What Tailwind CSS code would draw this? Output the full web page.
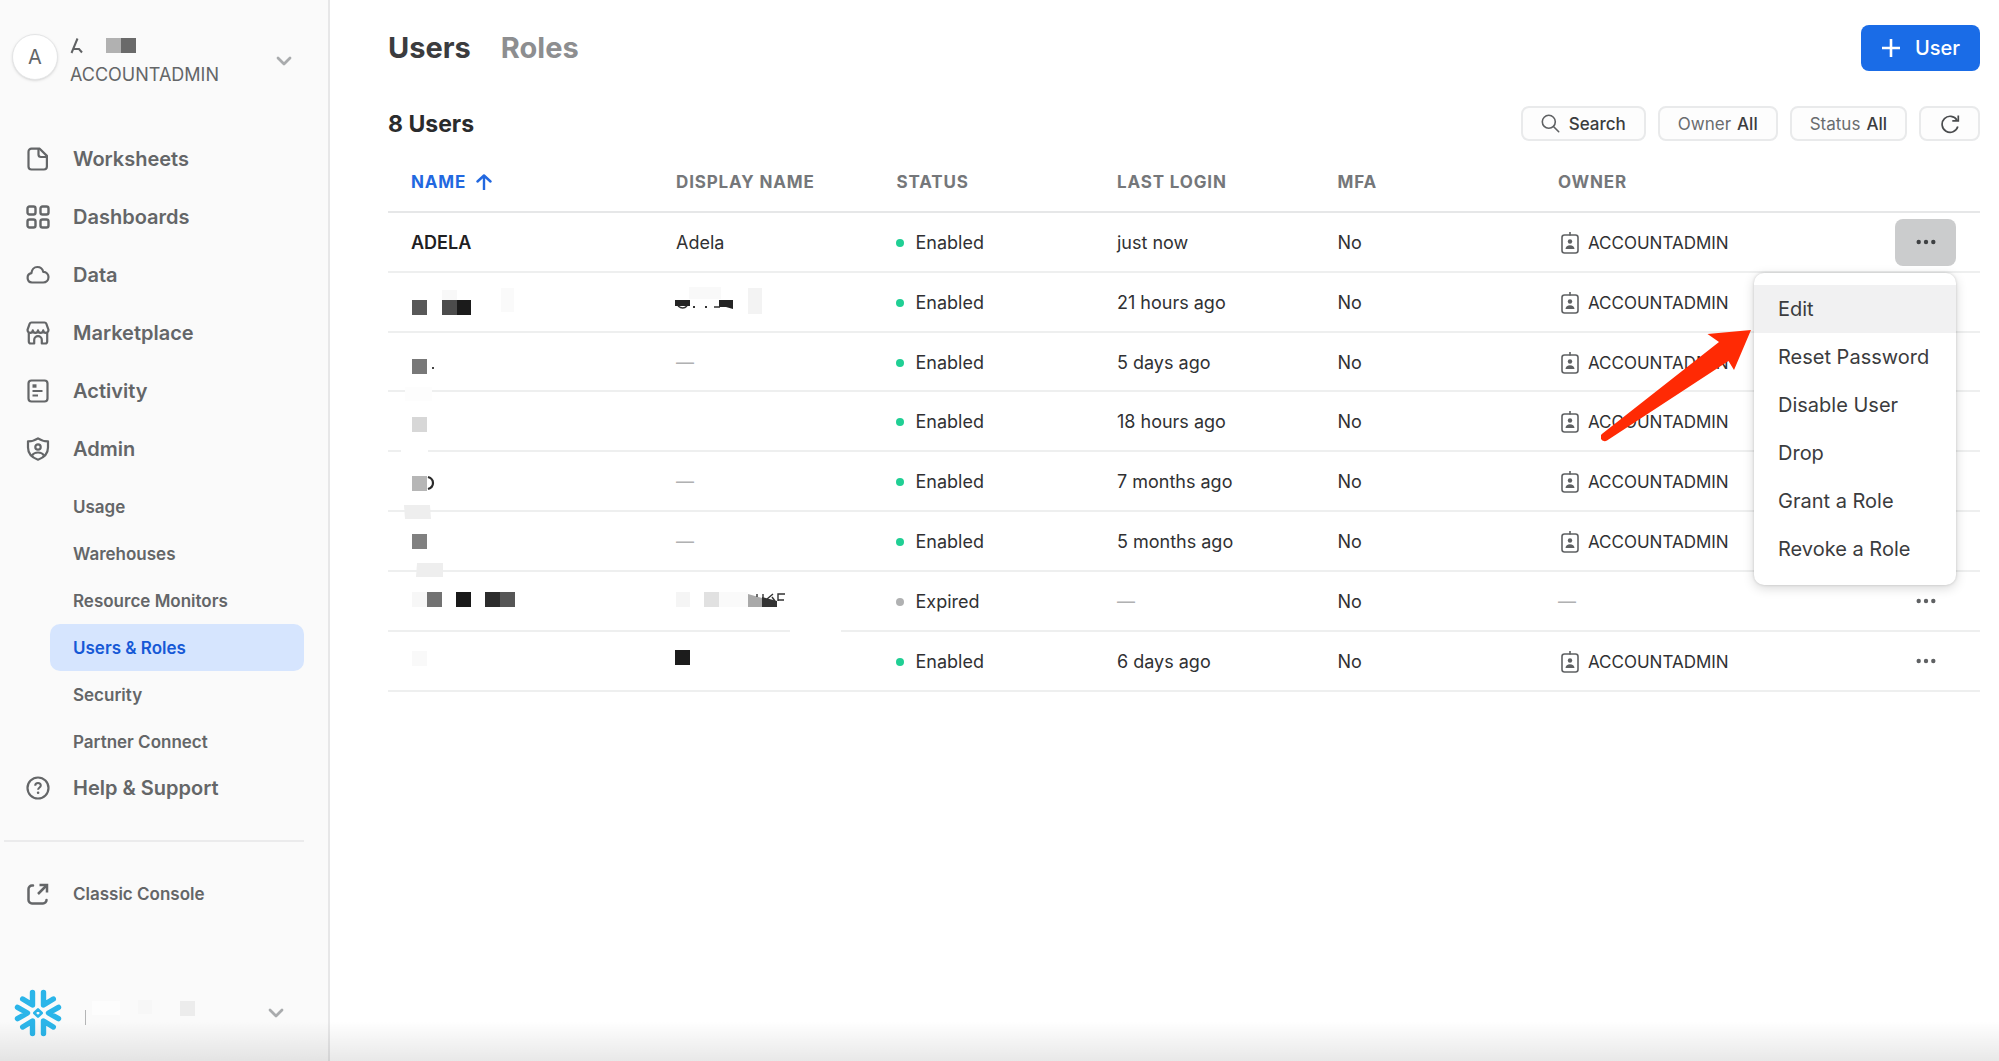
<!DOCTYPE html>
<html lang="en">
<head>
<meta charset="utf-8">
<meta name="viewport" content="width=device-width, initial-scale=1">
<title>Users &amp; Roles</title>
<script src="https://cdn.jsdelivr.net/npm/@tailwindcss/browser@4"></script>
</head>
<body class="relative flex min-h-screen bg-white font-['Inter',sans-serif] text-[18px] leading-6 text-[#303133]">
<svg class="hidden" aria-hidden="true">
  <symbol id="chevron" viewBox="0 0 16 10"><path d="M2 2l6 6 6-6" fill="none" stroke="#a9abad" stroke-width="2.800" stroke-linecap="round" stroke-linejoin="round"/></symbol>
  <symbol id="badge" viewBox="0 0 20 24"><rect x="2" y="4" width="16" height="18" rx="2.5" fill="none" stroke="#5f6163" stroke-width="1.600"/><path d="M10 1v3.500" stroke="#5f6163" stroke-width="1.600"/><circle cx="10" cy="10.500" r="2.200" fill="#5f6163"/><path d="M5.500 18c0-2.500 2-3.800 4.500-3.800s4.500 1.300 4.500 3.800z" fill="#5f6163"/></symbol>
  <symbol id="dots" viewBox="0 0 20 6"><circle cx="2.700" cy="3" r="2.200"/><circle cx="10" cy="3" r="2.200"/><circle cx="17.300" cy="3" r="2.200"/></symbol>
</svg>

<aside class="flex w-[330px] shrink-0 flex-col border-r-2 border-[#e7e7e8] bg-[#fafafa] text-[#646668]">
  <button type="button" class="flex items-start pt-[34px] pr-9 pl-3 text-left">
    <span class="flex size-[46px] shrink-0 items-center justify-center rounded-full border border-[#e4e5e6] bg-white text-[20px] shadow-sm">A</span>
    <span class="ml-3 flex flex-1 flex-col gap-[7px]">
      <svg class="h-[22px] w-[70px]" viewBox="0 0 70 22"><path d="M1.500 19L7.500 4.500M3 15h6l3 3.500" fill="none" stroke="#606264" stroke-width="2"/><path fill="#b1b1b1" d="M36 4h15v15H36z"/><path fill="#6a6a6a" d="M51 4h15v15H51z"/></svg>
      <span>ACCOUNTADMIN</span>
    </span>
    <svg class="h-[10px] w-4 self-center"><use href="#chevron"/></svg>
  </button>

  <nav class="mt-[43px] flex flex-col text-[20px] font-semibold">
    <a href="#" class="flex h-[58px] items-center gap-[23px] pl-[26px]">
      <svg class="size-6" viewBox="0 0 24 24" fill="none" stroke="currentColor" stroke-width="2.200" stroke-linejoin="round"><path d="M5.500 1.700h8.200l7.200 7.200v10.600a3 3 0 0 1-3 3H5.500a3 3 0 0 1-3-3V4.700a3 3 0 0 1 3-3z"/><path d="M12.500 2v5.500a2.500 2.500 0 0 0 2.500 2.500h5.800"/></svg>Worksheets</a>
    <a href="#" class="flex h-[58px] items-center gap-[23px] pl-[26px]">
      <svg class="size-6" viewBox="0 0 24 24" fill="none" stroke="currentColor" stroke-width="2.400"><rect x="1.500" y="1.500" width="8" height="8" rx="2"/><rect x="14.500" y="1.500" width="8" height="8" rx="2"/><rect x="1.500" y="14.500" width="8" height="8" rx="2"/><rect x="14.500" y="14.500" width="8" height="8" rx="2"/></svg>Dashboards</a>
    <a href="#" class="flex h-[58px] items-center gap-[23px] pl-[26px]">
      <svg class="size-6" viewBox="0 0 24 24" fill="none" stroke="currentColor" stroke-width="2.200" stroke-linejoin="round"><path d="M6 19.500a4.700 4.700 0 0 1-.6-9.300C5.800 6.500 8.200 4 11.300 4c3 0 5.300 2 6 4.900 3 .2 5.200 2.400 5.200 5.200 0 3-2.300 5.400-5.300 5.400z"/></svg>Data</a>
    <a href="#" class="flex h-[58px] items-center gap-[23px] pl-[26px]">
      <svg class="size-6" viewBox="0 0 24 24" fill="none" stroke="currentColor" stroke-width="2.200" stroke-linejoin="round" stroke-linecap="round"><path d="M5.500 1.500h13a2 2 0 0 1 1.900 1.300l2.100 6c0 2-1.300 3-2.700 3-1.500 0-2.600-1-2.600-2.500 0 1.500-1.100 2.500-2.600 2.500S12 10.800 12 9.300c0 1.500-1.100 2.500-2.600 2.500S6.800 10.800 6.800 9.300c0 1.500-1.100 2.500-2.600 2.500s-2.700-1-2.700-3l2.100-6a2 2 0 0 1 1.900-1.300z"/><path d="M2.800 12v8.500a2 2 0 0 0 2 2h3.400V19a3.800 3.800 0 0 1 7.600 0v3.500h3.400a2 2 0 0 0 2-2V12"/></svg>Marketplace</a>
    <a href="#" class="flex h-[58px] items-center gap-[23px] pl-[26px]">
      <svg class="size-6" viewBox="0 0 24 24" fill="none" stroke="currentColor" stroke-width="2.200"><rect x="2.500" y="1.500" width="19" height="21" rx="3"/><path d="M6.500 7h4" stroke-width="3.400"/><path d="M6.500 12h10M6.500 16.500h5.500"/></svg>Activity</a>
    <a href="#" class="flex h-[58px] items-center gap-[23px] pl-[26px]">
      <svg class="size-6" viewBox="0 0 24 24" fill="none" stroke="currentColor" stroke-width="2.200" stroke-linejoin="round"><path d="M12 1.300c2.500 1.800 6 2.900 10 3v6.200c0 5.500-3.300 9.800-10 12.200C5.300 20.300 2 16 2 10.500V4.300c4-.1 7.500-1.200 10-3z"/><circle cx="12" cy="10" r="2.700"/><path d="M6 18.500c1.200-2 3.300-3 6-3s4.800 1 6 3"/></svg>Admin</a>

    <div class="flex flex-col pt-[5px] pr-6 pl-[50px] text-[17px]">
      <a href="#" class="flex h-[47px] items-center pl-[23px]">Usage</a>
      <a href="#" class="flex h-[47px] items-center pl-[23px]">Warehouses</a>
      <a href="#" class="flex h-[47px] items-center pl-[23px]">Resource Monitors</a>
      <a href="#" aria-current="page" class="flex h-[47px] items-center rounded-[10px] bg-[#d6e5fe] pl-[23px] text-[#1659d6]">Users &amp; Roles</a>
      <a href="#" class="flex h-[47px] items-center pl-[23px]">Security</a>
      <a href="#" class="flex h-[47px] items-center pl-[23px]">Partner Connect</a>
    </div>

    <a href="#" class="flex h-[46px] items-center gap-[23px] pl-[26px]">
      <svg class="size-6" viewBox="0 0 24 24" fill="none" stroke="currentColor" stroke-width="2.200"><circle cx="12" cy="12" r="10.500"/><path d="M9.200 9.700c0-1.700 1.200-2.700 2.800-2.700s2.800 1 2.800 2.500c0 2-2.700 2-2.700 4.300" stroke-width="2"/><circle cx="12.100" cy="16.800" r=".6" stroke-width="1.400"/></svg>Help &amp; Support</a>
    <hr class="mt-[29px] mr-6 ml-1 border-t-2 border-[#ebebec]">
    <a href="#" class="mt-[29px] flex h-[46px] items-center gap-[23px] pl-[26px] text-[17px]">
      <svg class="size-6" viewBox="0 0 24 24" fill="none" stroke="currentColor" stroke-width="2.500" stroke-linecap="round"><path d="M7 3.500H6A3.500 3.500 0 0 0 2.500 7v11A3.500 3.500 0 0 0 6 21.500h11a3.500 3.500 0 0 0 3.500-3.500"/><path d="M12 12l8.500-8.500" stroke-linecap="butt"/><path d="M13.500 3H21v7.500" stroke-linecap="butt"/></svg>Classic Console</a>
  </nav>

  <button type="button" class="mt-auto flex items-center pr-11 pb-6 pl-[14px]" aria-label="Switch account">
    <svg class="size-12" viewBox="0 0 48 48" fill="none" stroke="#2bb5e9" stroke-width="5.400" stroke-linecap="round" stroke-linejoin="round"><path d="M18.500 3.500V16L8.700 10M29.500 3.500V16l9.800-6M18.500 44.500V32l-9.800 6M29.500 44.500V32l9.800 6M3.500 18.300L13.500 24l-10 5.700M44.500 18.300L34.500 24l10 5.700"/><path d="M24 20.300l3.700 3.700-3.700 3.700-3.700-3.700z" stroke-width="2.600"/></svg>
    <svg class="ml-[21px] h-7 w-[120px]" viewBox="0 0 120 28"><path fill="#b4b5b6" d="M2 11h1v15H2z"/><path fill="#fdfdfd" d="M9 2h28v14H9z"/><path fill="#f7f7f7" d="M55 1h14v14H55z"/><path fill="#ececec" d="M97 2h15v15H97z"/></svg>
    <svg class="ml-auto h-[10px] w-4"><use href="#chevron"/></svg>
  </button>
</aside>

<main class="min-w-0 flex-1 pr-[19px] pl-[58px]">
  <header class="flex items-center justify-between pt-[25px]">
    <nav class="flex gap-[30px] text-[29px] leading-9 font-bold">
      <a href="#" aria-current="page" class="text-[#3b3c3e]">Users</a>
      <a href="#" class="text-[#8d8e90]">Roles</a>
    </nav>
    <button type="button" class="flex h-[46px] items-center gap-[14px] rounded-lg bg-[#1a6ce7] px-5 text-[20px] font-medium text-white">
      <svg class="size-5" viewBox="0 0 20 20" stroke="currentColor" stroke-width="2.600"><path d="M10 1v18M1 10h18"/></svg>User
    </button>
  </header>

  <div class="mt-[35px] flex items-center justify-between">
    <h1 class="text-[23px] font-bold text-[#2a2b2d]">8 Users</h1>
    <div class="flex gap-3 text-[17px]">
      <button type="button" class="flex h-[35px] items-center gap-[9px] rounded-lg border-2 border-[#e9eaeb] bg-[#fdfdfd] px-[18px] font-medium text-[#3b3c3e]">
        <svg class="size-[19px]" viewBox="0 0 19 19" fill="none" stroke="#5f6163" stroke-width="1.600" stroke-linecap="round"><circle cx="7.800" cy="7.800" r="6.500"/><path d="M12.700 12.700l5 5"/></svg>Search</button>
      <button type="button" class="flex h-[35px] items-center gap-[6px] rounded-lg border-2 border-[#e9eaeb] bg-[#fdfdfd] px-[18px] text-[#6a6c6e]">Owner <span class="font-medium text-[#3b3c3e]">All</span></button>
      <button type="button" class="flex h-[35px] items-center gap-[6px] rounded-lg border-2 border-[#e9eaeb] bg-[#fdfdfd] px-[18px] text-[#6a6c6e]">Status <span class="font-medium text-[#3b3c3e]">All</span></button>
      <button type="button" aria-label="Refresh" class="flex h-[35px] w-[61px] items-center justify-center rounded-lg border-2 border-[#e9eaeb] bg-[#fdfdfd]">
        <svg class="size-5" viewBox="0 0 20 20" fill="none" stroke="#4a4c4e" stroke-width="1.700"><path d="M17.800 12.500A8 8 0 1 1 17 6.200"/><path d="M18.300 1.500v5.300h-6"/></svg></button>
    </div>
  </div>

  <table class="mt-[11px] w-full table-fixed border-collapse text-left">
    <colgroup><col class="w-[265px]"><col class="w-[13.85%]"><col class="w-[13.85%]"><col class="w-[13.85%]"><col class="w-[13.85%]"><col><col class="w-[108px]"></colgroup>
    <thead>
      <tr class="h-[60px] border-b-2 border-[#e6e7e8] text-[17px] font-semibold tracking-wider text-[#75777a]">
        <th class="pl-[23px] text-[#2268e0]"><span class="flex items-center gap-[10px]">NAME <svg class="size-4" viewBox="0 0 16 16" fill="none" stroke="currentColor" stroke-width="2.400" stroke-linecap="round" stroke-linejoin="round"><path d="M8 15.500V1.500M1.500 7.500l6.500-6 6.500 6"/></svg></span></th>
        <th class="pl-[23px]">DISPLAY NAME</th>
        <th class="pl-[23px]">STATUS</th>
        <th class="pl-[23px]">LAST LOGIN</th>
        <th class="pl-[23px]">MFA</th>
        <th class="pl-[23px]">OWNER</th>
        <th></th>
      </tr>
    </thead>
    <tbody>
      <tr class="h-[60px] border-b-2 border-[#eeefef]">
        <td class="pt-[2px] pl-[23px] font-semibold text-[#1f2022]">ADELA</td>
        <td class="pt-[2px] pl-[23px]">Adela</td>
        <td class="pt-[2px] pl-[23px]"><span class="flex items-center gap-[11px]"><i class="size-2 rounded-full bg-[#20cf94]"></i>Enabled</span></td>
        <td class="pt-[2px] pl-[23px]">just now</td>
        <td class="pt-[2px] pl-[23px]">No</td>
        <td class="pt-[2px] pl-[23px]"><span class="flex items-center gap-2 pl-[2px] text-[17px]"><svg class="h-6 w-5"><use href="#badge"/></svg>ACCOUNTADMIN</span></td>
        <td class="pr-6">
          <div class="relative ml-auto w-[61px]">
            <button type="button" aria-label="Actions" aria-expanded="true" class="flex h-[47px] w-full items-center justify-center rounded-lg bg-[#cbcccd]"><svg class="h-[6px] w-5 fill-[#3f4143]"><use href="#dots"/></svg></button>
            <div class="absolute top-[54px] right-0 z-10 flex w-[202px] flex-col rounded-[10px] bg-white py-3 text-[20px] text-[#3b3c3e] shadow-[0_3px_12px_rgba(0,0,0,0.16),0_0_3px_rgba(0,0,0,0.16)]" role="menu">
              <button type="button" role="menuitem" class="h-12 bg-[#f1f1f2] pl-6 text-left">Edit</button>
              <button type="button" role="menuitem" class="h-12 pl-6 text-left whitespace-nowrap">Reset Password</button>
              <button type="button" role="menuitem" class="h-12 pl-6 text-left">Disable User</button>
              <button type="button" role="menuitem" class="h-12 pl-6 text-left">Drop</button>
              <button type="button" role="menuitem" class="h-12 pl-6 text-left">Grant a Role</button>
              <button type="button" role="menuitem" class="h-12 pl-6 text-left">Revoke a Role</button>
              <svg class="absolute top-[57px] -left-[153px] h-[114px] w-[152px]" viewBox="0 0 152 114" fill="#ff2a04"><path d="M150 0L133 40 127.500 31 6 110.500A4 4 0 0 1 1.500 103.500L118 12 106.500 4z"/></svg>
            </div>
          </div>
        </td>
      </tr>
      <tr class="h-[60px] border-b-2 border-[#eeefef]">
        <td class="pl-[23px]"><svg class="h-[58px] w-[110px] overflow-visible" viewBox="0 0 110 58"><path fill="#f8f8f8" d="M31 17h15v10H31z"/><path fill="#fafafa" d="M90 15h13v24H90z"/><path fill="#585858" d="M1 27h15v15H1z"/><path fill="#4c4c4c" d="M31 27h15v15H31z"/><path fill="#1b1b1b" d="M46 27h14v15H46z"/></svg></td>
        <td class="pl-[23px]"><svg class="h-[58px] w-[110px] overflow-visible" viewBox="0 0 110 58"><path fill="#f9f9f9" d="M13 14h32v12H13z"/><path fill="#f3f3f3" d="M72 15h14v26H72z"/><path fill="#242424" d="M-1 27h15v6H-1zM43 27h14v9l-7-2h-7z"/><path d="M2 33q5 4 9 0M38 34h6" fill="none" stroke="#333" stroke-width="1.500"/><path fill="#333" d="M17 33h2v2h-2zM29 33h2v2h-2z"/></svg></td>
        <td class="pt-[2px] pl-[23px]"><span class="flex items-center gap-[11px]"><i class="size-2 rounded-full bg-[#20cf94]"></i>Enabled</span></td>
        <td class="pt-[2px] pl-[23px]">21 hours ago</td>
        <td class="pt-[2px] pl-[23px]">No</td>
        <td class="pt-[2px] pl-[23px]"><span class="flex items-center gap-2 pl-[2px] text-[17px]"><svg class="h-6 w-5"><use href="#badge"/></svg>ACCOUNTADMIN</span></td>
        <td class="pr-6"><button type="button" aria-label="Actions" class="ml-auto flex h-[47px] w-[61px] items-center justify-center"><svg class="h-[6px] w-5 fill-[#5f6163]"><use href="#dots"/></svg></button></td>
      </tr>
      <tr class="h-[59px] border-b-2 border-[#eeefef]">
        <td class="pl-[23px]"><svg class="relative h-[57px] w-[110px] overflow-visible" viewBox="0 0 110 57"><path fill="#787878" d="M1 26h15v15H1z"/><path fill="#444" d="M21 34h2v2h-2z"/><path fill="#fdfdfd" d="M-6 54h27v14H-6z"/></svg></td>
        <td class="pt-[2px] pl-[23px] text-[#b0b1b2]">—</td>
        <td class="pt-[2px] pl-[23px]"><span class="flex items-center gap-[11px]"><i class="size-2 rounded-full bg-[#20cf94]"></i>Enabled</span></td>
        <td class="pt-[2px] pl-[23px]">5 days ago</td>
        <td class="pt-[2px] pl-[23px]">No</td>
        <td class="pt-[2px] pl-[23px]"><span class="flex items-center gap-2 pl-[2px] text-[17px]"><svg class="h-6 w-5"><use href="#badge"/></svg>ACCOUNTADMIN</span></td>
        <td class="pr-6"><button type="button" aria-label="Actions" class="ml-auto flex h-[47px] w-[61px] items-center justify-center"><svg class="h-[6px] w-5 fill-[#5f6163]"><use href="#dots"/></svg></button></td>
      </tr>
      <tr class="h-[60px] border-b-2 border-[#eeefef]">
        <td class="pl-[23px]"><svg class="relative h-[58px] w-[110px] overflow-visible" viewBox="0 0 110 58"><path fill="#d7d7d7" d="M1 25h15v15H1z"/><path fill="#fff" d="M-10 54h27v14h-27z"/></svg></td>
        <td class="pl-[23px]"></td>
        <td class="pt-[2px] pl-[23px]"><span class="flex items-center gap-[11px]"><i class="size-2 rounded-full bg-[#20cf94]"></i>Enabled</span></td>
        <td class="pt-[2px] pl-[23px]">18 hours ago</td>
        <td class="pt-[2px] pl-[23px]">No</td>
        <td class="pt-[2px] pl-[23px]"><span class="flex items-center gap-2 pl-[2px] text-[17px]"><svg class="h-6 w-5"><use href="#badge"/></svg>ACCOUNTADMIN</span></td>
        <td class="pr-6"><button type="button" aria-label="Actions" class="ml-auto flex h-[47px] w-[61px] items-center justify-center"><svg class="h-[6px] w-5 fill-[#5f6163]"><use href="#dots"/></svg></button></td>
      </tr>
      <tr class="h-[60px] border-b-2 border-[#eeefef]">
        <td class="pl-[23px]"><svg class="relative h-[58px] w-[110px] overflow-visible" viewBox="0 0 110 58"><path fill="#b6b6b6" d="M1 24h15v15H1z"/><path d="M17 25q5 1.500 5 6t-5 6" fill="none" stroke="#2b2b2b" stroke-width="2.200"/><path fill="#eee" d="M-7 53h26l1 14H-6z"/></svg></td>
        <td class="pt-[2px] pl-[23px] text-[#b0b1b2]">—</td>
        <td class="pt-[2px] pl-[23px]"><span class="flex items-center gap-[11px]"><i class="size-2 rounded-full bg-[#20cf94]"></i>Enabled</span></td>
        <td class="pt-[2px] pl-[23px]">7 months ago</td>
        <td class="pt-[2px] pl-[23px]">No</td>
        <td class="pt-[2px] pl-[23px]"><span class="flex items-center gap-2 pl-[2px] text-[17px]"><svg class="h-6 w-5"><use href="#badge"/></svg>ACCOUNTADMIN</span></td>
        <td class="pr-6"><button type="button" aria-label="Actions" class="ml-auto flex h-[47px] w-[61px] items-center justify-center"><svg class="h-[6px] w-5 fill-[#5f6163]"><use href="#dots"/></svg></button></td>
      </tr>
      <tr class="h-[60px] border-b-2 border-[#eeefef]">
        <td class="pl-[23px]"><svg class="relative h-[58px] w-[110px] overflow-visible" viewBox="0 0 110 58"><path fill="#808080" d="M1 22h15v15H1z"/><path fill="#eee" d="M6 51h26v14H5z"/></svg></td>
        <td class="pt-[2px] pl-[23px] text-[#b0b1b2]">—</td>
        <td class="pt-[2px] pl-[23px]"><span class="flex items-center gap-[11px]"><i class="size-2 rounded-full bg-[#20cf94]"></i>Enabled</span></td>
        <td class="pt-[2px] pl-[23px]">5 months ago</td>
        <td class="pt-[2px] pl-[23px]">No</td>
        <td class="pt-[2px] pl-[23px]"><span class="flex items-center gap-2 pl-[2px] text-[17px]"><svg class="h-6 w-5"><use href="#badge"/></svg>ACCOUNTADMIN</span></td>
        <td class="pr-6"><button type="button" aria-label="Actions" class="ml-auto flex h-[47px] w-[61px] items-center justify-center"><svg class="h-[6px] w-5 fill-[#5f6163]"><use href="#dots"/></svg></button></td>
      </tr>
      <tr class="h-[60px] border-b-2 border-[#eeefef]">
        <td class="pl-[23px]"><svg class="h-[58px] w-[110px] overflow-visible" viewBox="0 0 110 58"><path fill="#f7f7f7" d="M1 20h15v15H1z"/><path fill="#727272" d="M16 20h15v15H16z"/><path fill="#191919" d="M45 20h15v15H45z"/><path fill="#2c2c2c" d="M74 20h15v15H74z"/><path fill="#565656" d="M89 20h15v15H89z"/></svg></td>
        <td class="pl-[23px]"><svg class="relative h-[58px] w-[110px] overflow-visible" viewBox="0 0 110 58"><path fill="#f5f5f5" d="M0 20h14v15H0z"/><path fill="#e1e1e1" d="M28 20h15v15H28z"/><path fill="#fafafa" d="M43 20h29v15H43z"/><path fill="#a9a9a9" d="M72 22l14 4v9H72z"/><path fill="#333" d="M86 25l15 4v6H86z"/><path d="M81 22v3M87 22v4M97 22l-6 5M96 25l3 4M102 29v-7h7M102 28h6" fill="none" stroke="#333" stroke-width="1.400"/><path fill="#fff" d="M114 54h51v10h-51z"/></svg></td>
        <td class="pt-[2px] pl-[23px]"><span class="flex items-center gap-[11px]"><i class="size-2 rounded-full bg-[#b0b1b2]"></i>Expired</span></td>
        <td class="pt-[2px] pl-[23px] text-[#b0b1b2]">—</td>
        <td class="pt-[2px] pl-[23px]">No</td>
        <td class="pt-[2px] pl-[23px] text-[#b0b1b2]">—</td>
        <td class="pr-6"><button type="button" aria-label="Actions" class="ml-auto flex h-[47px] w-[61px] items-center justify-center"><svg class="h-[6px] w-5 fill-[#5f6163]"><use href="#dots"/></svg></button></td>
      </tr>
      <tr class="h-[60px] border-b-2 border-[#eeefef]">
        <td class="pl-[23px]"><svg class="h-[58px] w-[110px]" viewBox="0 0 110 58"><path fill="#f9f9f9" d="M1 19h15v15H1z"/></svg></td>
        <td class="pl-[23px]"><svg class="h-[58px] w-[110px] overflow-visible" viewBox="0 0 110 58"><path fill="#1c1c1c" d="M-1 18h15v15H-1z"/></svg></td>
        <td class="pt-[2px] pl-[23px]"><span class="flex items-center gap-[11px]"><i class="size-2 rounded-full bg-[#20cf94]"></i>Enabled</span></td>
        <td class="pt-[2px] pl-[23px]">6 days ago</td>
        <td class="pt-[2px] pl-[23px]">No</td>
        <td class="pt-[2px] pl-[23px]"><span class="flex items-center gap-2 pl-[2px] text-[17px]"><svg class="h-6 w-5"><use href="#badge"/></svg>ACCOUNTADMIN</span></td>
        <td class="pr-6"><button type="button" aria-label="Actions" class="ml-auto flex h-[47px] w-[61px] items-center justify-center"><svg class="h-[6px] w-5 fill-[#5f6163]"><use href="#dots"/></svg></button></td>
      </tr>
    </tbody>
  </table>
</main>
<div class="pointer-events-none absolute inset-x-0 bottom-0 h-10 bg-linear-to-b from-transparent to-black/9"></div>
</body>
</html>
